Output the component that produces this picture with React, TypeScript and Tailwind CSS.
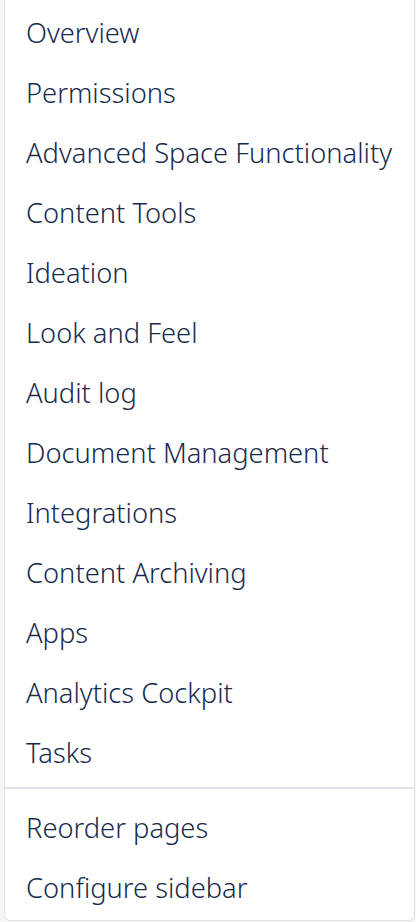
const mainItems = [
  "Overview",
  "Permissions",
  "Advanced Space Functionality",
  "Content Tools",
  "Ideation",
  "Look and Feel",
  "Audit log",
  "Document Management",
  "Integrations",
  "Content Archiving",
  "Apps",
  "Analytics Cockpit",
  "Tasks",
];

const footerItems = ["Reorder pages", "Configure sidebar"];

function MenuItem({ label }: { label: string }) {
  return (
    <div className="h-[60px] flex items-center pl-[21px] text-[27.3px] [font-weight:350] text-[#172b4d] whitespace-nowrap">
      {label}
    </div>
  );
}

export default function App() {
  return (
    <div
      className="h-[922px] w-[416px] bg-[#f4f5f7] overflow-hidden"
      style={{ fontFamily: '"Noto Sans", "Open Sans", sans-serif' }}
    >
      <div className="ml-[4px] w-[411px] h-[921px] bg-white border-l border-r border-b border-[#dfe1e6] rounded-bl-[6px] rounded-br-[6px]">
        <div className="pt-[3px] pb-[4px]">
          {mainItems.map((m) => (
            <MenuItem key={m} label={m} />
          ))}
        </div>
        <div className="h-[2px] bg-[#e4e5ea]" />
        <div className="pt-[9px]">
          {footerItems.map((m) => (
            <MenuItem key={m} label={m} />
          ))}
        </div>
      </div>
    </div>
  );
}
